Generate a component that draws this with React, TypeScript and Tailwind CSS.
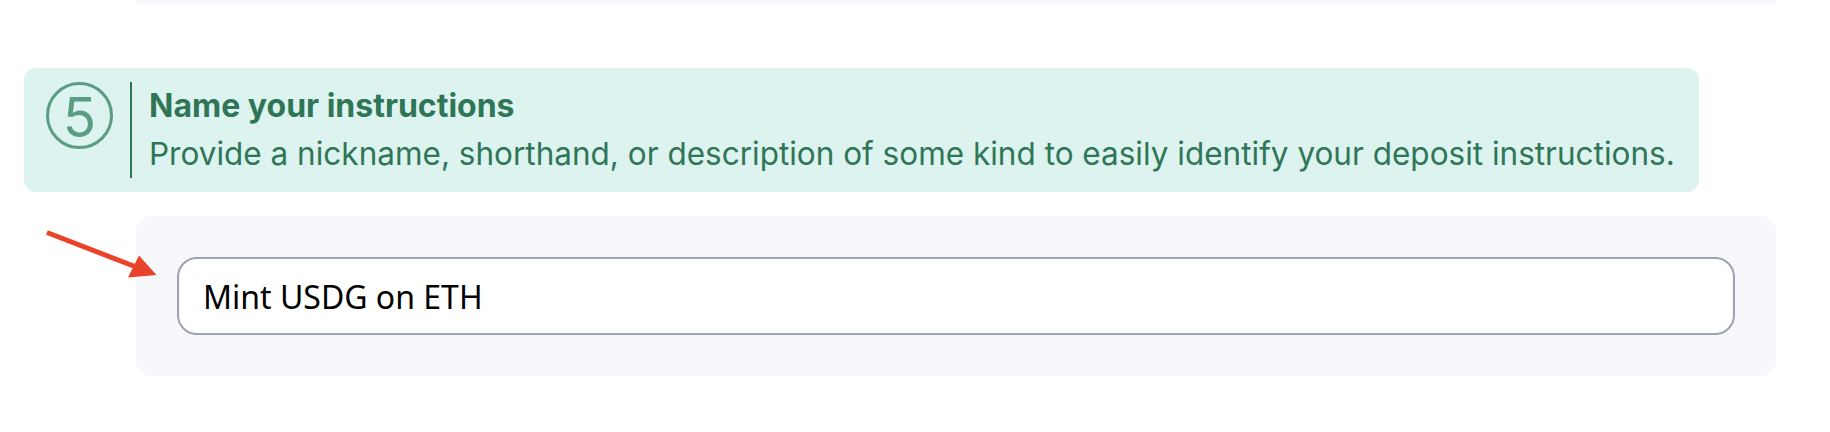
import React from "react";

function Arrow() {
  return (
    <svg
      className="absolute left-[40px] top-[222px]"
      width="130"
      height="64"
      viewBox="0 0 130 64"
      fill="none"
    >
      <line x1="7" y1="10.5" x2="100" y2="46.5" stroke="#e9442a" strokeWidth="5" strokeLinecap="butt" />
      <polygon points="116.5,53 99,33.5 88,55.5" fill="#e9442a" />
    </svg>
  );
}

export default function App() {
  return (
    <div className="relative w-[1830px] h-[432px] bg-white overflow-hidden">
      <div className="ml-[136px] w-[1640px] h-[4px] bg-[#f7f8fb]" />

      <div className="mt-[64px] ml-[24px] w-[1675px] h-[124px] rounded-xl bg-[#ddf3ef] flex items-start py-[14px] pl-[22px]">
        <div className="w-[67px] h-[67px] rounded-full border-[3px] border-[#5b9c84] flex items-center justify-center shrink-0">
          <span className="font-['Inter',sans-serif] font-normal text-[55px] leading-none text-[#5b9c84] pt-[3px]">
            5
          </span>
        </div>
        <div className="ml-[17px] w-[2px] self-stretch bg-[#2f7657]" />
        <div className="ml-[17px] flex flex-col font-['Inter',sans-serif] text-[#2f7657]">
          <div className="text-[32px] leading-[48px] font-bold">Name your instructions</div>
          <div className="text-[31.5px] leading-[48px] font-normal">
            Provide a nickname, shorthand, or description of some kind to easily identify your deposit instructions.
          </div>
        </div>
      </div>

      <div className="mt-[24px] ml-[136px] w-[1640px] h-[160px] rounded-2xl bg-[#f7f8fb] p-[41px]">
        <input
          readOnly
          defaultValue="Mint USDG on ETH"
          className="w-full h-[78px] rounded-[20px] border-2 border-[#9ea3ae] bg-white pl-[24px] text-[32px] text-black font-['Noto_Sans',sans-serif] outline-none"
        />
      </div>

      <Arrow />
    </div>
  );
}
